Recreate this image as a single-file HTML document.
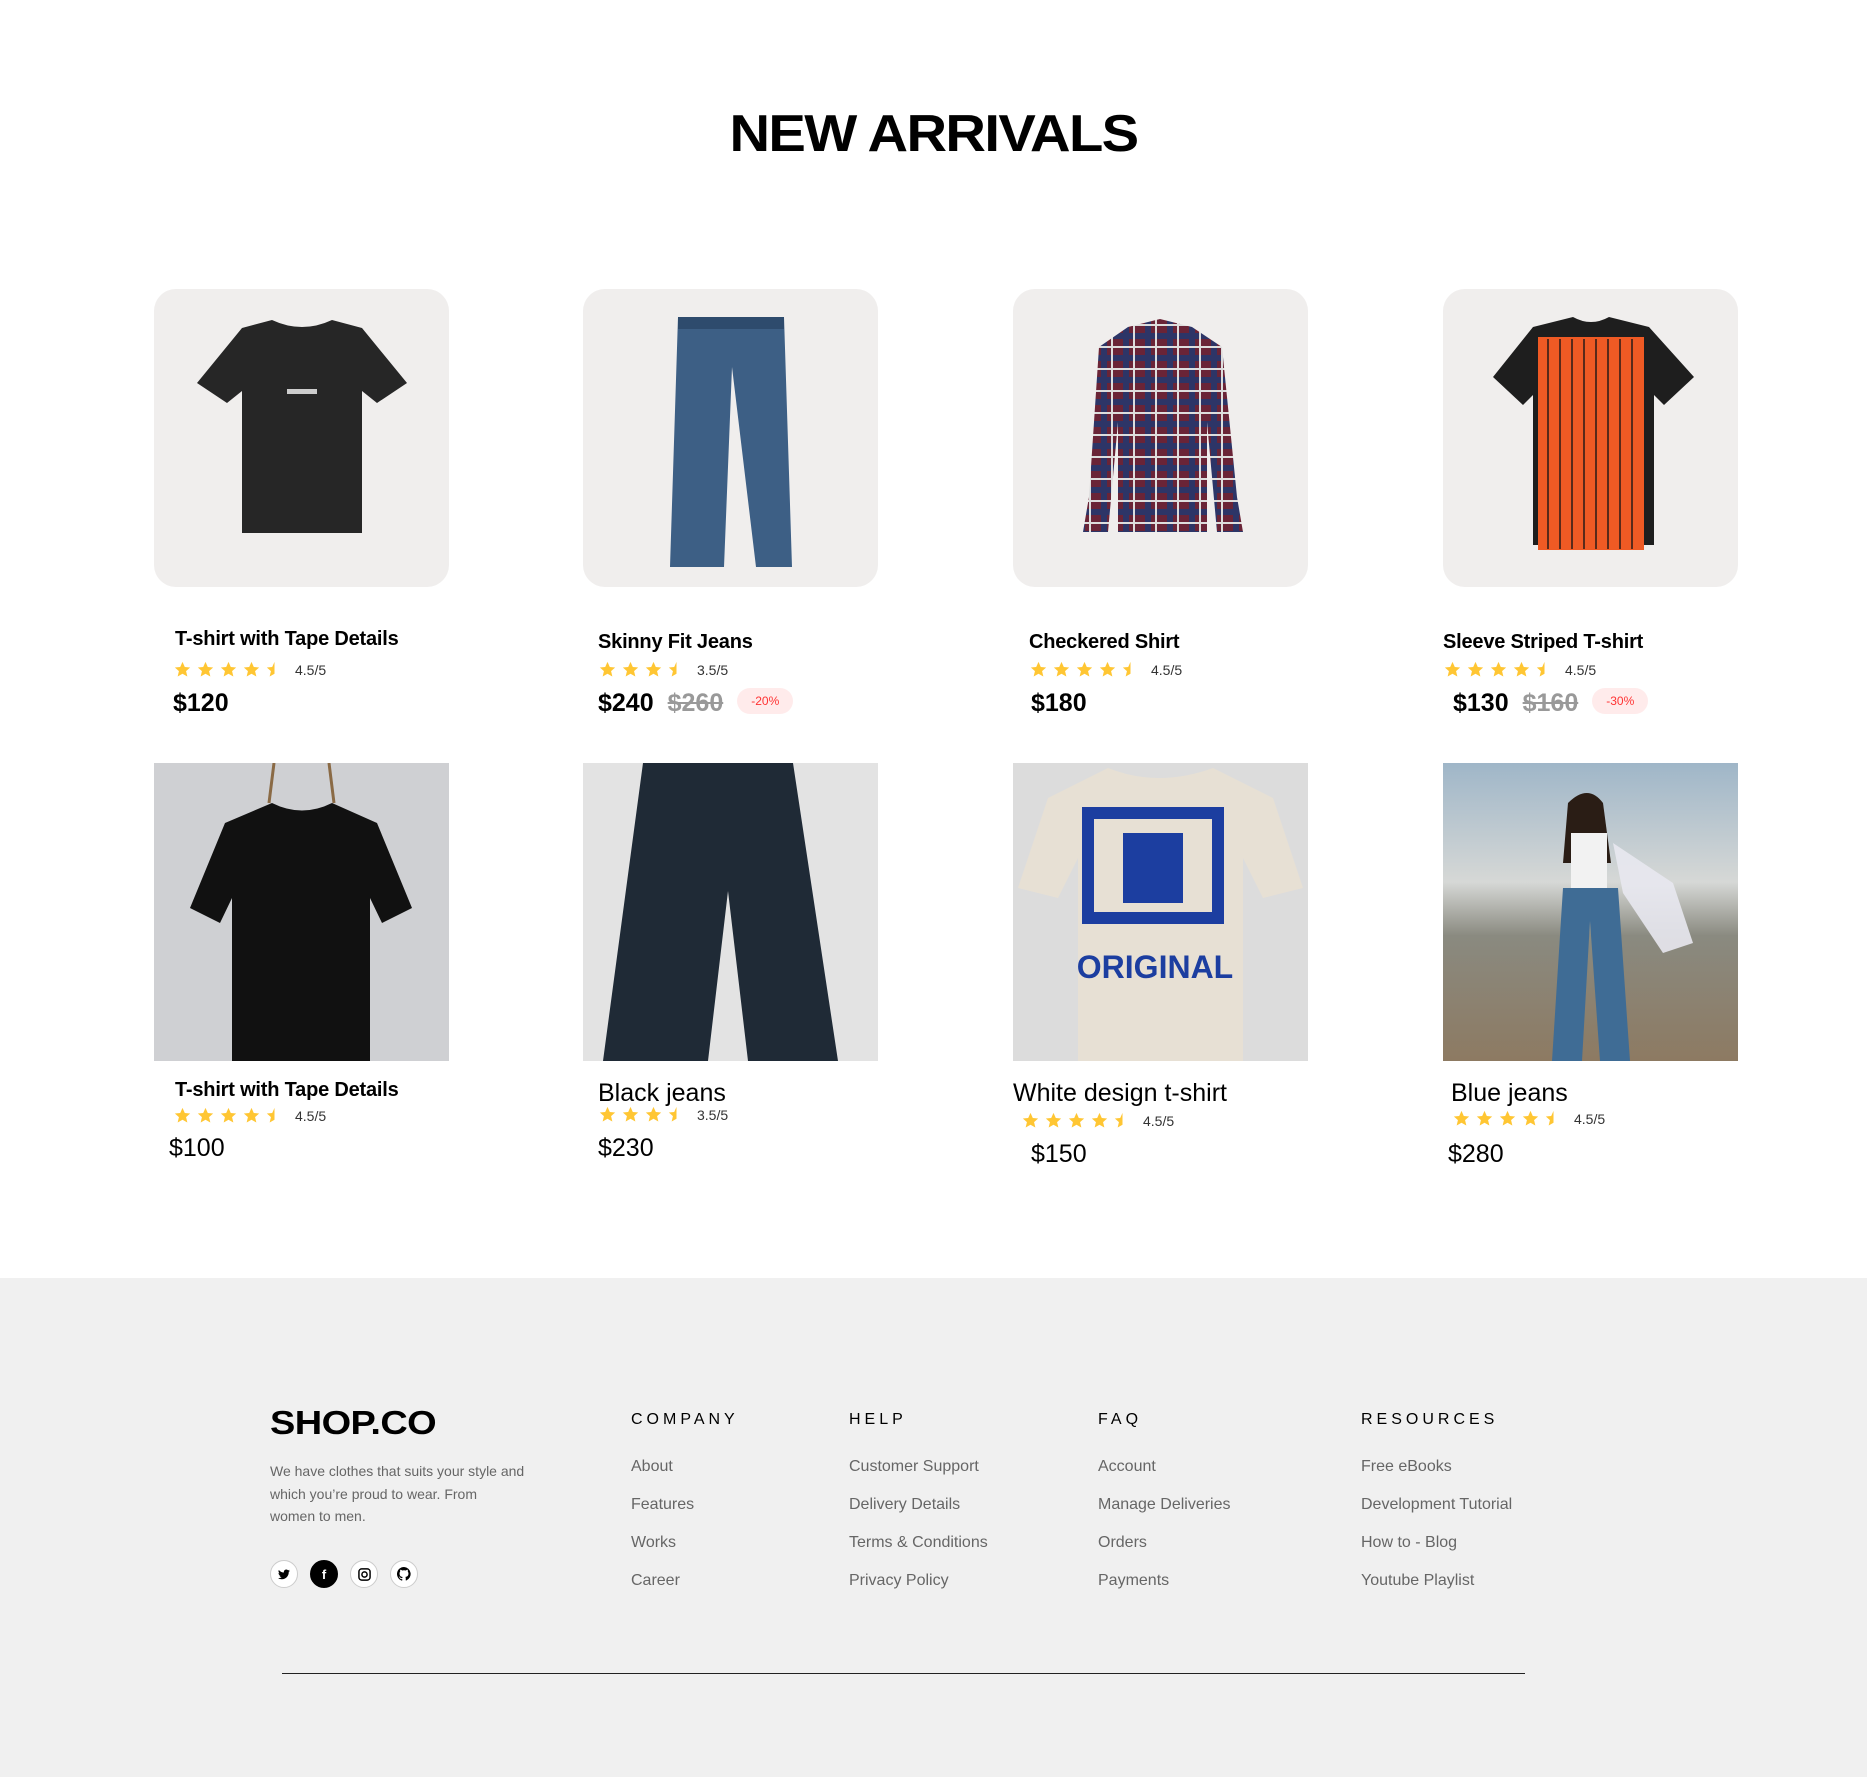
<!DOCTYPE html>
<html><head><meta charset="utf-8"><style>
*{margin:0;padding:0;box-sizing:border-box}
body{width:1867px;height:1777px;position:relative;background:#fff;font-family:"Liberation Sans",sans-serif;color:#000;overflow:hidden}
.a{position:absolute;white-space:nowrap}
h1{position:absolute;left:0;width:1867px;top:104px;text-align:center;font-size:52px;font-weight:900;letter-spacing:-1.5px;transform:scaleX(1.08)}
.img{position:absolute;width:295px;height:298px;background:#F0EEED;overflow:hidden}
.r{border-radius:22px}
.t{font-size:20px;font-weight:bold;letter-spacing:-0.2px}
.t2{font-size:25px}
.p{font-size:25px;font-weight:bold}
.p2{font-size:25px}
.old{color:#999;text-decoration:line-through;margin-left:14px}
.badge{display:inline-block;background:#FFEBEB;color:#FF3333;font-size:12px;font-weight:normal;padding:6px 14px;border-radius:20px;vertical-align:middle;margin-left:14px;position:relative;top:-3px}
.st{display:flex;align-items:center;gap:6px;font-size:14px;color:#333}
.st svg{width:17px;height:17px}
.st span{margin-left:6px}
.foot{position:absolute;left:0;top:1278px;width:1867px;height:499px;background:#F0F0F0}
.hd{font-size:16px;letter-spacing:4px;color:#000}
.lk{font-size:16px;color:#666}
.soc{position:absolute;width:28px;height:28px;border-radius:50%;background:#fff;border:1px solid #ccc;display:flex;align-items:center;justify-content:center;font-size:13px;font-weight:bold}
</style></head><body>
<svg width="0" height="0" style="position:absolute"><defs>
<symbol id="s" viewBox="0 0 20 20"><path fill="#FFC633" d="M10 1l2.7 6 6.3.6-4.8 4.3 1.5 6.3L10 15l-5.7 3.2 1.5-6.3L1 7.6l6.3-.6z"/></symbol>
<symbol id="h" viewBox="0 0 20 20"><path fill="#FFC633" d="M10 1v14l-5.7 3.2 1.5-6.3L1 7.6l6.3-.6z"/></symbol>
</defs></svg>

<h1>NEW ARRIVALS</h1>

<div class="img r" style="left:154px;top:289px"><svg width="295" height="298" viewBox="0 0 295 298"><path d="M88 39l30-8q30 14 60 0l30 8 45 55-30 20-15-12v142H88V102l-15 12-30-20z" fill="#262626"/><rect x="133" y="100" width="30" height="5" fill="#ccc"/></svg></div>
<div class="img r" style="left:583px;top:289px"><svg width="295" height="298" viewBox="0 0 295 298"><path d="M95 28h106l8 250h-36l-24-200-8 200H87z" fill="#3d5f85"/><rect x="95" y="28" width="106" height="12" fill="#2e4b6d"/></svg></div>
<div class="img r" style="left:1013px;top:289px"><svg width="295" height="298" viewBox="0 0 295 298"><defs><pattern id="pl" width="22" height="22" patternUnits="userSpaceOnUse"><rect width="22" height="22" fill="#6a2437"/><rect width="22" height="6" fill="#2d3567"/><rect width="6" height="22" fill="#2d3567"/><rect x="10" width="2" height="22" fill="#ddd"/><rect y="13" width="22" height="2" fill="#ddd"/></pattern></defs><path d="M115 38l32-8 32 8 30 20 15 150 6 35h-26l-10-110v110H105V133l-10 110H70l6-35 10-150z" fill="url(#pl)"/></svg></div>
<div class="img r" style="left:1443px;top:289px"><svg width="295" height="298" viewBox="0 0 295 298"><path d="M90 38l40-10q18 10 36 0l40 10 45 50-30 28-10-10v150H90V106l-10 10-30-28z" fill="#1e1e1e"/><rect x="95" y="48" width="106" height="213" fill="#ef5a24"/><g stroke="#5a2a1a" stroke-width="2"><path d="M105 50v210M117 50v210M129 50v210M141 50v210M153 50v210M165 50v210M177 50v210M189 50v210"/></g></svg></div>

<div class="a t" style="left:175px;top:628px">T-shirt with Tape Details</div>
<div class="a st" style="left:174px;top:661px"><svg><use href="#s"/></svg><svg><use href="#s"/></svg><svg><use href="#s"/></svg><svg><use href="#s"/></svg><svg><use href="#h"/></svg><span>4.5/5</span></div>
<div class="a p" style="left:173px;top:689px">$120</div>

<div class="a t" style="left:598px;top:631px">Skinny Fit Jeans</div>
<div class="a st" style="left:599px;top:661px"><svg><use href="#s"/></svg><svg><use href="#s"/></svg><svg><use href="#s"/></svg><svg><use href="#h"/></svg><span>3.5/5</span></div>
<div class="a p" style="left:598px;top:689px">$240<span class="old">$260</span><span class="badge">-20%</span></div>

<div class="a t" style="left:1029px;top:631px">Checkered Shirt</div>
<div class="a st" style="left:1030px;top:661px"><svg><use href="#s"/></svg><svg><use href="#s"/></svg><svg><use href="#s"/></svg><svg><use href="#s"/></svg><svg><use href="#h"/></svg><span>4.5/5</span></div>
<div class="a p" style="left:1031px;top:689px">$180</div>

<div class="a t" style="left:1443px;top:631px">Sleeve Striped T-shirt</div>
<div class="a st" style="left:1444px;top:661px"><svg><use href="#s"/></svg><svg><use href="#s"/></svg><svg><use href="#s"/></svg><svg><use href="#s"/></svg><svg><use href="#h"/></svg><span>4.5/5</span></div>
<div class="a p" style="left:1453px;top:689px">$130<span class="old">$160</span><span class="badge">-30%</span></div>

<div class="img" style="left:154px;top:763px;background:#cfd0d3"><svg width="295" height="298" viewBox="0 0 295 298"><path d="M120 0l-5 40M175 0l5 40" stroke="#8a6a45" stroke-width="3"/><path d="M118 40q30 15 60 0l45 20 35 85-30 15-12-25v163H78V135l-12 25-30-15 35-85z" fill="#111"/></svg></div>
<div class="img" style="left:583px;top:763px;background:#e3e3e3"><svg width="295" height="298" viewBox="0 0 295 298"><path d="M60 0h150l45 298h-90l-20-170-20 170H20z" fill="#1f2a36"/></svg></div>
<div class="img" style="left:1013px;top:763px;background:#dcdcdc"><svg width="295" height="298" viewBox="0 0 295 298"><path d="M95 5q50 20 105 0l60 30 30 90-40 10-20-40v203H65V95l-20 40-40-10 30-90z" fill="#e7e0d4"/><rect x="75" y="50" width="130" height="105" fill="none" stroke="#1c3ea0" stroke-width="12"/><rect x="110" y="70" width="60" height="70" fill="#1c3ea0"/><text x="142" y="215" font-family="Liberation Sans" font-weight="bold" font-size="32" fill="#1c3ea0" text-anchor="middle">ORIGINAL</text></svg></div>
<div class="img" style="left:1443px;top:763px;background:linear-gradient(#9fb6c8 0%,#d6d8d6 40%,#8a8a80 58%,#8d7a62 100%)"><svg width="295" height="298" viewBox="0 0 295 298"><path d="M125 40q20-20 35 0l8 60-48 0z" fill="#2a1d15"/><rect x="128" y="70" width="36" height="55" fill="#f2f2f2"/><path d="M120 125h55l12 173h-30l-10-140-8 140h-30z" fill="#3f6c95"/><path d="M170 80l60 40 20 60-30 10-40-60z" fill="#e8e8f0" opacity=".9"/></svg></div>

<div class="a t" style="left:175px;top:1079px">T-shirt with Tape Details</div>
<div class="a st" style="left:174px;top:1107px"><svg><use href="#s"/></svg><svg><use href="#s"/></svg><svg><use href="#s"/></svg><svg><use href="#s"/></svg><svg><use href="#h"/></svg><span>4.5/5</span></div>
<div class="a p2" style="left:169px;top:1134px">$100</div>

<div class="a t2" style="left:598px;top:1079px">Black jeans</div>
<div class="a st" style="left:599px;top:1106px"><svg><use href="#s"/></svg><svg><use href="#s"/></svg><svg><use href="#s"/></svg><svg><use href="#h"/></svg><span>3.5/5</span></div>
<div class="a p2" style="left:598px;top:1134px">$230</div>

<div class="a t2" style="left:1013px;top:1079px">White design t-shirt</div>
<div class="a st" style="left:1022px;top:1112px"><svg><use href="#s"/></svg><svg><use href="#s"/></svg><svg><use href="#s"/></svg><svg><use href="#s"/></svg><svg><use href="#h"/></svg><span>4.5/5</span></div>
<div class="a p2" style="left:1031px;top:1140px">$150</div>

<div class="a t2" style="left:1451px;top:1079px">Blue jeans</div>
<div class="a st" style="left:1453px;top:1110px"><svg><use href="#s"/></svg><svg><use href="#s"/></svg><svg><use href="#s"/></svg><svg><use href="#s"/></svg><svg><use href="#h"/></svg><span>4.5/5</span></div>
<div class="a p2" style="left:1448px;top:1140px">$280</div>

<div class="foot"></div>
<div class="a" style="left:270px;top:1404px;font-size:33px;font-weight:900;letter-spacing:-0.5px;transform:scaleX(1.15);transform-origin:left">SHOP.CO</div>
<div class="a" style="left:270px;top:1460px;font-size:14px;line-height:22.5px;color:#666;white-space:normal;width:255px">We have clothes that suits your style and which you’re proud to wear. From women to men.</div>
<div class="soc" style="left:270px;top:1560px"><svg width="12" height="11" viewBox="0 0 24 20"><path fill="#000" d="M24 2.4a9.8 9.8 0 01-2.8.8A4.9 4.9 0 0023.3.4a9.8 9.8 0 01-3.1 1.2A4.9 4.9 0 0011.8 6 14 14 0 011.7.9a4.9 4.9 0 001.5 6.6 4.9 4.9 0 01-2.2-.6 4.9 4.9 0 003.9 4.8 4.9 4.9 0 01-2.2.1 4.9 4.9 0 004.6 3.4A9.9 9.9 0 010 17.2 14 14 0 007.5 19.4c9.1 0 14-7.5 14-14v-.6A10 10 0 0024 2.4z"/></svg></div>
<div class="soc" style="left:310px;top:1560px;background:#000;color:#fff;border-color:#000">f</div>
<div class="soc" style="left:350px;top:1560px"><svg width="13" height="13" viewBox="0 0 14 14"><rect x="1" y="1" width="12" height="12" rx="3" fill="none" stroke="#000" stroke-width="1.6"/><circle cx="7" cy="7" r="2.8" fill="none" stroke="#000" stroke-width="1.6"/></svg></div>
<div class="soc" style="left:390px;top:1560px"><svg width="14" height="14" viewBox="0 0 16 16"><path fill="#000" d="M8 0a8 8 0 00-2.5 15.6c.4 0 .5-.2.5-.4v-1.5c-2.2.5-2.7-1-2.7-1-.4-.9-.9-1.2-.9-1.2-.7-.5.1-.5.1-.5.8.1 1.2.8 1.2.8.7 1.3 1.9.9 2.3.7.1-.5.3-.9.5-1.1-1.8-.2-3.6-.9-3.6-4 0-.9.3-1.6.8-2.1-.1-.2-.4-1 .1-2.1 0 0 .7-.2 2.2.8a7.4 7.4 0 014 0c1.5-1 2.2-.8 2.2-.8.4 1.1.2 1.9.1 2.1.5.6.8 1.3.8 2.1 0 3.1-1.9 3.7-3.6 3.9.3.3.5.8.5 1.5v2.2c0 .2.1.5.6.4A8 8 0 008 0z"/></svg></div>

<div class="a hd" style="left:631px;top:1411px">COMPANY</div>
<div class="a lk" style="left:631px;top:1458px">About</div>
<div class="a lk" style="left:631px;top:1496px">Features</div>
<div class="a lk" style="left:631px;top:1534px">Works</div>
<div class="a lk" style="left:631px;top:1572px">Career</div>

<div class="a hd" style="left:849px;top:1411px">HELP</div>
<div class="a lk" style="left:849px;top:1458px">Customer Support</div>
<div class="a lk" style="left:849px;top:1496px">Delivery Details</div>
<div class="a lk" style="left:849px;top:1534px">Terms &amp; Conditions</div>
<div class="a lk" style="left:849px;top:1572px">Privacy Policy</div>

<div class="a hd" style="left:1098px;top:1411px">FAQ</div>
<div class="a lk" style="left:1098px;top:1458px">Account</div>
<div class="a lk" style="left:1098px;top:1496px">Manage Deliveries</div>
<div class="a lk" style="left:1098px;top:1534px">Orders</div>
<div class="a lk" style="left:1098px;top:1572px">Payments</div>

<div class="a hd" style="left:1361px;top:1411px">RESOURCES</div>
<div class="a lk" style="left:1361px;top:1458px">Free eBooks</div>
<div class="a lk" style="left:1361px;top:1496px">Development Tutorial</div>
<div class="a lk" style="left:1361px;top:1534px">How to - Blog</div>
<div class="a lk" style="left:1361px;top:1572px">Youtube Playlist</div>

<div class="a" style="left:282px;top:1673px;width:1243px;height:1px;background:#222"></div>
</body></html>
